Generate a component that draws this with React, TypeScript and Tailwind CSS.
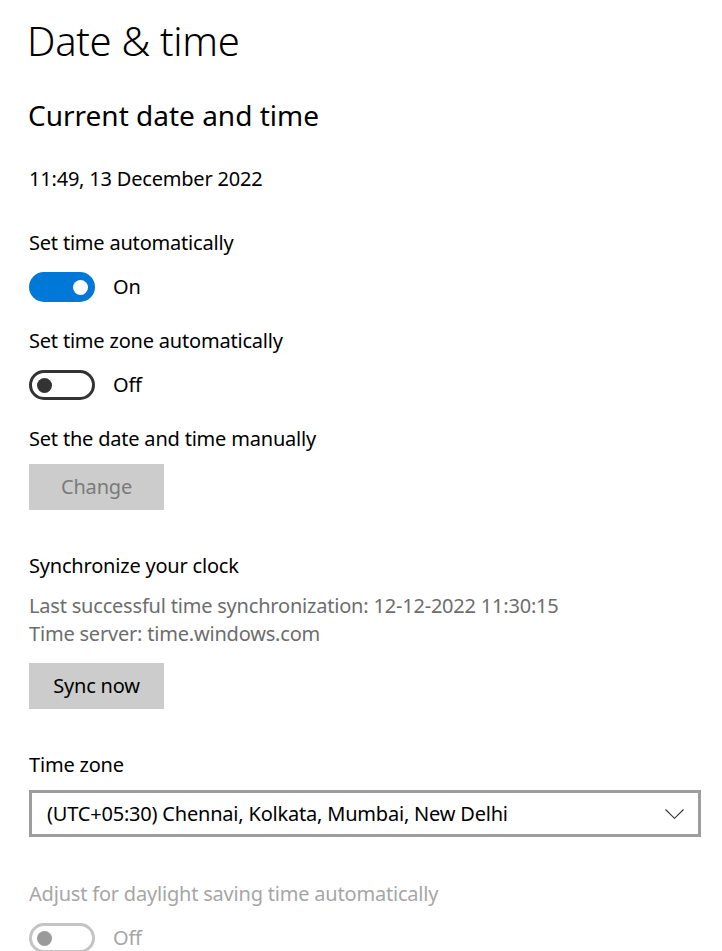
import React from "react";

const font = { fontFamily: '"Noto Sans", "Open Sans", sans-serif' };

const body = "text-[20px] leading-7 tracking-[-0.2px]";

function Toggle({ on, disabled }: { on: boolean; disabled?: boolean }) {
  if (on) {
    return (
      <span className="flex h-[30px] w-[66px] items-center justify-end rounded-full bg-[#0078d7] pr-[7px]">
        <span className="h-[15px] w-[15px] rounded-full bg-white" />
      </span>
    );
  }
  return (
    <span
      className={
        disabled
          ? "flex h-[30px] w-[66px] items-center rounded-full border-[3px] border-[#c4c4c4] pl-[5px]"
          : "flex h-[30px] w-[66px] items-center rounded-full border-[3px] border-[#333333] pl-[5px]"
      }
    >
      <span className={disabled ? "h-[15px] w-[15px] rounded-full bg-[#9a9a9a]" : "h-[15px] w-[15px] rounded-full bg-[#333333]"} />
    </span>
  );
}

function ToggleRow({ on, disabled }: { on: boolean; disabled?: boolean }) {
  return (
    <div className="mt-[15px] flex items-center gap-[18px]">
      <Toggle on={on} disabled={disabled} />
      <span className={disabled ? `${body} text-[#a6a6a6]` : `${body} text-black`}>{on ? "On" : "Off"}</span>
    </div>
  );
}

export default function App() {
  return (
    <div className="min-h-screen overflow-hidden bg-white pl-[29px] text-black" style={font}>
      <h1 className="ml-[-2px] pt-[13px] text-[40px] font-light leading-[56px] tracking-[-0.3px]">Date &amp; time</h1>
      <h2 className="ml-[-1px] mt-[26px] text-[28px] font-normal leading-[40px]">Current date and time</h2>
      <p className={`mt-[30px] ${body}`}>11:49, 13 December 2022</p>

      <p className={`mt-[36px] ${body}`}>Set time automatically</p>
      <ToggleRow on />

      <p className={`mt-[25px] ${body}`}>Set time zone automatically</p>
      <ToggleRow on={false} />

      <p className={`mt-[25px] ${body}`}>Set the date and time manually</p>
      <button type="button" className={`mt-[11px] block h-[46px] w-[135px] bg-[#cccccc] ${body} text-[#7a7a7a]`}>
        Change
      </button>

      <p className={`mt-[42px] ${body}`}>Synchronize your clock</p>
      <p className={`mt-[12px] ${body} text-[#6d6d6d]`}>Last successful time synchronization: 12-12-2022 11:30:15</p>
      <p className={`${body} text-[#6d6d6d]`}>Time server: time.windows.com</p>
      <button type="button" className={`mt-[15px] block h-[46px] w-[135px] bg-[#cccccc] ${body} text-black`}>
        Sync now
      </button>

      <p className={`mt-[42px] ${body}`}>Time zone</p>
      <div className="mt-[11px] flex h-[47px] w-[672px] items-center justify-between border-[3px] border-[#9d9d9d] pl-[15px] pr-[14px]">
        <span className={body}>(UTC+05:30) Chennai, Kolkata, Mumbai, New Delhi</span>
        <svg width="19" height="10" viewBox="0 0 19 10" fill="none">
          <path d="M0.5 0.5 L9.5 9.3 L18.5 0.5" stroke="#333" strokeWidth="1.1" />
        </svg>
      </div>

      <p className={`mt-[43px] ${body} text-[#a6a6a6]`}>Adjust for daylight saving time automatically</p>
      <ToggleRow on={false} disabled />
    </div>
  );
}
